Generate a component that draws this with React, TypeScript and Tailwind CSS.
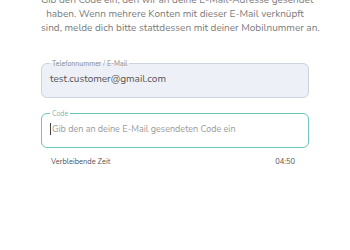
export default function App() {
  return (
    <div className="h-[250px] w-[350px] overflow-hidden bg-white font-['Nunito','Lato',sans-serif]">
      <div className="-mt-[7px] px-[41px]">
        <p className="whitespace-nowrap text-center text-[10px] leading-[14px] text-[#7b7b7b]">
          Gib den Code ein, den wir an deine E-Mail-Adresse gesendet
          <br />
          haben. Wenn mehrere Konten mit dieser E-Mail verknüpft
          <br />
          sind, melde dich bitte stattdessen mit deiner Mobilnummer an.
        </p>

        <div className="mt-[25px] flex flex-col gap-[12px]">
          {/* Telefonnummer */}
          <fieldset className="h-[38px] rounded-[6px] border border-[#cfd3dd] bg-[#eef0f7] px-[8px]">
            <legend className="px-[2px] text-[7px] leading-[7px] text-[#8c8c8c]">Telefonnummer / E-Mail</legend>
            <div className="pt-[5px] text-[10px] leading-[14px] text-[#555]">test.customer@gmail.com</div>
          </fieldset>

          {/* Code */}
          <fieldset className="h-[38px] rounded-[6px] border-[1.5px] border-[#6cc6bc] bg-white px-[8px]">
            <legend className="px-[2px] text-[7px] leading-[7px] text-[#7fb8b2]">Code</legend>
            <div className="flex items-center pt-[5px]">
              <span className="mr-[1px] h-[12px] w-px bg-[#444]" />
              <span className="text-[9px] leading-[14px] text-[#9a9a9a]">
                Gib den an deine E-Mail gesendeten Code ein
              </span>
            </div>
          </fieldset>
        </div>

        <div className="mt-[8px] flex justify-between pl-[10px] pr-[14px] text-[7.5px] text-[#555]">
          <span>Verbleibende Zeit</span>
          <span>04:50</span>
        </div>
      </div>
    </div>
  );
}
